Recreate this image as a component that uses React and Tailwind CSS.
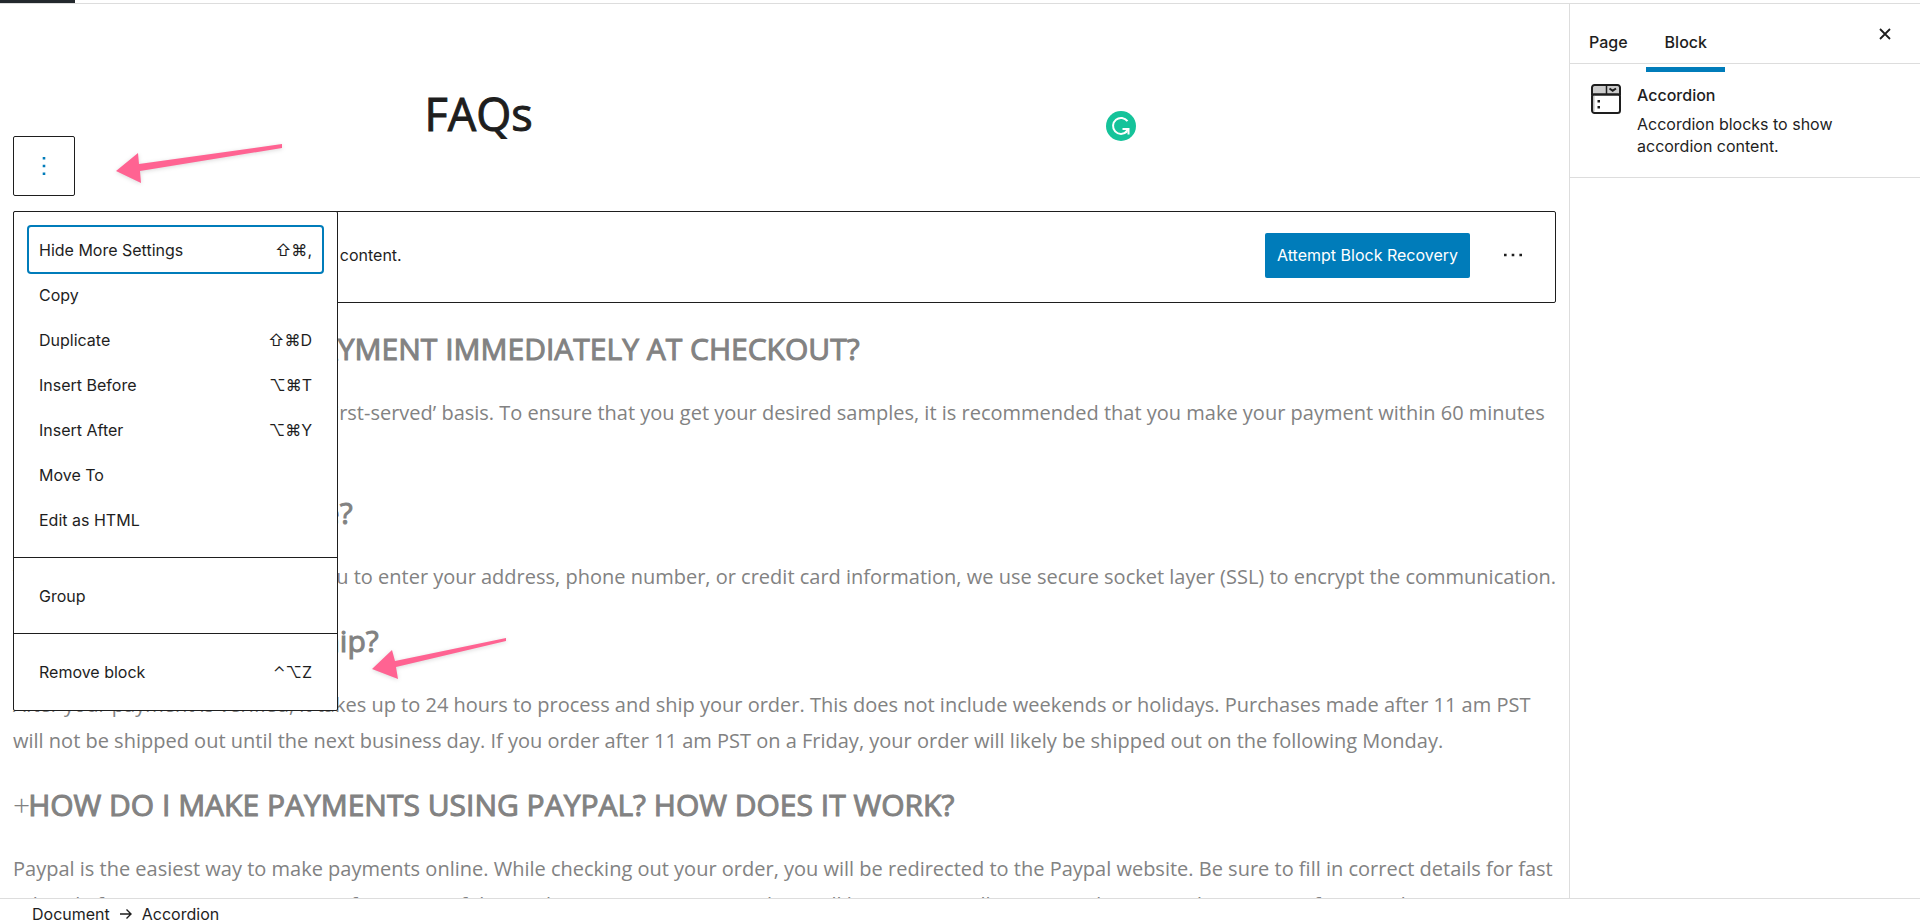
import React from 'react';

const MENU = [
  [
    { label: 'Hide More Settings', keys: '⇧⌘,', focused: true },
    { label: 'Copy' },
    { label: 'Duplicate', keys: '⇧⌘D' },
    { label: 'Insert Before', keys: '⌥⌘T' },
    { label: 'Insert After', keys: '⌥⌘Y' },
    { label: 'Move To' },
    { label: 'Edit as HTML' },
  ],
  [{ label: 'Group' }],
  [{ label: 'Remove block', keys: '⌃⌥Z' }],
];

const FAQS = [
  {
    question: 'DO I HAVE TO GIVE PAYMENT IMMEDIATELY AT CHECKOUT?',
    lines: [
      'Samples are lent on a ‘first-come, first-served’ basis. To ensure that you get your desired samples, it is recommended that you make your payment within 60 minutes',
      'of placing your order.',
    ],
  },
  {
    question: 'Is our payment secure?',
    lines: [
      'Yes, it will. Whenever we ask for you to enter your address, phone number, or credit card information, we use secure socket layer (SSL) to encrypt the communication.',
    ],
  },
  {
    question: 'When will my order ship?',
    lines: [
      'After your payment is verified, it takes up to 24 hours to process and ship your order. This does not include weekends or holidays. Purchases made after 11 am PST',
      'will not be shipped out until the next business day. If you order after 11 am PST on a Friday, your order will likely be shipped out on the following Monday.',
    ],
  },
  {
    question: 'HOW DO I MAKE PAYMENTS USING PAYPAL? HOW DOES IT WORK?',
    lines: [
      'Paypal is the easiest way to make payments online. While checking out your order, you will be redirected to the Paypal website. Be sure to fill in correct details for fast',
      '& hassle free payment processing. After successful Paypal payment, our new tracking will be automatically generated as set under in most of your orders.',
    ],
  },
];

const App = () => (
  <div className="flex h-screen flex-col overflow-hidden bg-white font-['Inter',sans-serif] text-base text-[#1e1e1e]">
    {/* Bottom edge of the top bar */}
    <div className="h-1 shrink-0 border-b border-[#ddd]">
      <div className="h-[3px] w-[75px] bg-[#23282d]" />
    </div>

    <div className="flex min-h-0 flex-1">
      <main className="relative min-w-0 flex-1 overflow-hidden px-[13px]">
        <div className="mx-auto flex h-[140px] max-w-[720px] items-end justify-between">
          <h1 className="font-['Open_Sans',sans-serif] text-[45px] leading-[60px] font-normal [-webkit-text-stroke:1px_currentColor]">
            FAQs
          </h1>
          <GrammarlyBadge />
        </div>

        <button
          type="button"
          aria-label="More options"
          className="-mt-2 flex h-[60px] w-[62px] items-center justify-center rounded-xs border border-[#1e1e1e] text-[#007cba]"
        >
          <Dots vertical />
        </button>

        <div className="relative mt-[15px]">
          <Recovery />
          <BlockMenu />
        </div>

        <div className="mt-6 font-['Open_Sans',sans-serif] text-[#828282]">
          {FAQS.map((faq) => (
            <Faq key={faq.question} {...faq} />
          ))}
        </div>

        <Arrow className="absolute top-[136px] left-[110px]" points="6,31 28,13 29,24 172,4 172,8 30,31 31,43" />
        <Arrow className="absolute top-[630px] left-[366px]" points="6,35 26,16 29,27 140,4 140,7 30,33 32,45" />
      </main>

      <Sidebar />
    </div>

    <footer className="flex h-[26px] shrink-0 items-start border-t border-[#ddd] pl-8">
      <nav aria-label="Block breadcrumb" className="flex items-center gap-[10px] pt-[3px]">
        <a href="#document">Document</a>
        <svg width="12" height="12" viewBox="0 0 12 12" fill="none" stroke="currentColor" strokeWidth="1.4" aria-hidden="true">
          <path d="M0 6h11M6.5 1.5 11 6l-4.5 4.5" />
        </svg>
        <a href="#accordion">Accordion</a>
      </nav>
    </footer>
  </div>
);

const Recovery = () => (
  <div className="flex h-[92px] items-center justify-between rounded-xs border border-[#1e1e1e] pr-5 pb-1 pl-2">
    <p>This block contains unexpected or invalid content.</p>
    <div className="flex items-center gap-5">
      <button type="button" className="h-[45px] rounded-xs bg-[#007cba] px-3 text-white">
        Attempt Block Recovery
      </button>
      <button type="button" aria-label="More recovery options" className="flex size-[45px] items-center justify-center">
        <Dots />
      </button>
    </div>
  </div>
);

const BlockMenu = () => (
  <div role="menu" className="absolute top-0 left-0 z-10 w-[325px] rounded-xs border border-[#1e1e1e] bg-white">
    {MENU.map((group, i) => (
      <div key={i} className="border-b border-[#1e1e1e] p-[15px] last:border-b-0 last:pb-4">
        {group.map(({ label, keys, focused }) => (
          <button
            key={label}
            type="button"
            role="menuitem"
            className={`flex h-[45px] w-full items-center justify-between rounded-xs px-[10px] ${focused ? 'ring-2 ring-[#007cba]' : ''}`}
          >
            <span>{label}</span>
            <span>{keys}</span>
          </button>
        ))}
      </div>
    ))}
  </div>
);

const Faq = ({ question, lines }) => (
  <section className="mb-6">
    <h2 className="text-[30px] leading-[44px] font-normal whitespace-nowrap">
      <span className="-mr-[2px] font-light">+</span>
      <span className="[-webkit-text-stroke:1px_currentColor]">{question}</span>
    </h2>
    <p className="mt-6 text-xl leading-9 whitespace-nowrap">
      {lines.map((line) => (
        <span key={line} className="block">{line}</span>
      ))}
    </p>
  </section>
);

const Sidebar = () => (
  <aside className="w-[351px] shrink-0 border-l border-[#ddd]">
    <div className="flex h-[60px] items-start justify-between border-b border-[#ddd] pr-[29px]">
      <div role="tablist" className="flex font-medium">
        <button type="button" role="tab" aria-selected="false" className="h-[68px] pt-2 pr-[18px] pl-[19px]">Page</button>
        <button type="button" role="tab" aria-selected="true" className="h-[68px] border-b-[5px] border-[#007cba] pt-3 pr-[18px] pl-[19px]">
          Block
        </button>
      </div>
      <button type="button" aria-label="Close settings" className="pt-6">
        <svg width="12" height="12" viewBox="0 0 12 12" stroke="currentColor" strokeWidth="1.8" aria-hidden="true">
          <path d="m1 1 10 10M11 1 1 11" />
        </svg>
      </button>
    </div>
    <div className="flex gap-4 border-b border-[#ddd] py-5 pl-[21px]">
      <AccordionIcon />
      <div>
        <h2 className="leading-[22px] font-medium">Accordion</h2>
        <p className="mt-[7px] w-[220px] leading-[22px]">Accordion blocks to show accordion content.</p>
      </div>
    </div>
  </aside>
);

const Dots = ({ vertical }) => (
  <svg width="20" height="20" viewBox="0 0 20 20" fill="currentColor" className={vertical ? 'rotate-90' : ''} aria-hidden="true">
    <path d="M1 8.700h2.600v2.600H1zM8.700 8.700h2.600v2.600H8.700zM16.400 8.700h2.600v2.600h-2.600z" />
  </svg>
);

const AccordionIcon = () => (
  <svg width="30" height="30" viewBox="0 0 30 30" fill="none" stroke="#1e1e1e" strokeWidth="2" className="shrink-0" aria-hidden="true">
    <path d="M1 10.500V3.500A2.500 2.500 0 0 1 3.500 1h23A2.500 2.500 0 0 1 29 3.500v7z" fill="#ccc" />
    <path d="M2.800 11.500v16" stroke="#bbb" strokeWidth="1.500" />
    <path d="M3 10.500a2 2 0 0 0-2 2v14A2.500 2.500 0 0 0 3.500 29h23a2.500 2.500 0 0 0 2.500-2.500v-14a2 2 0 0 0-2-2z" />
    <path d="M15.500 1v10" strokeWidth="1.500" />
    <path d="m18.500 4.500 3.200 2.200L25 4.500" />
    <path d="M6.500 16h2.500v2.500H6.500zM6.500 22h2.500v2.500H6.500z" fill="#1e1e1e" stroke="none" />
  </svg>
);

const GrammarlyBadge = () => (
  <svg width="30" height="30" viewBox="0 0 30 30" fill="none" className="mr-[9px] mb-[3px]" role="img" aria-label="Grammarly">
    <circle cx="15" cy="15" r="15" fill="#15c39a" />
    <path d="M21.500 10.200A8 8 0 1 0 20.800 20.500" stroke="#fff" strokeWidth="2" />
    <path d="M16.500 18h6v5.500" stroke="#fff" strokeWidth="2" />
    <path d="m22 18.500-2.500 3" stroke="#fff" strokeWidth="2" />
  </svg>
);

const Arrow = ({ className, points }) => (
  <svg width="180" height="52" viewBox="0 0 180 52" className={`pointer-events-none z-20 drop-shadow-sm ${className}`} aria-hidden="true">
    <polygon points={points} fill="#ff6392" />
  </svg>
);

export default App;
